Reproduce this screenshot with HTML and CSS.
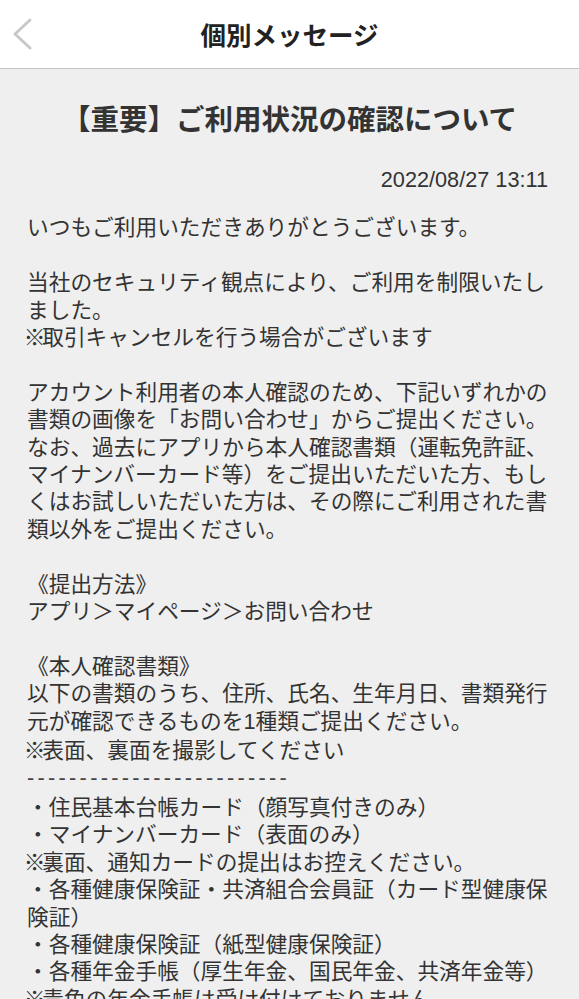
FILE: index.html
```html
<!DOCTYPE html>
<html lang="ja">
<head>
<meta charset="utf-8">
<title>個別メッセージ</title>
<link rel="stylesheet" href="styles.css">
</head>
<body>
<header class="nav">
  <div class="nav-side">
    <svg class="back" width="22" height="34" viewBox="0 0 22 34" aria-hidden="true">
      <polyline points="18,3 3,17 18,31" fill="none" stroke="#c8c8c8" stroke-width="3" stroke-linecap="round" stroke-linejoin="round"/>
    </svg>
  </div>
  <h1 class="nav-title">個別メッセージ</h1>
  <div class="nav-side"></div>
</header>
<main class="message">
  <h2 class="msg-title">【重要】ご利用状況の確認について</h2>
  <div class="msg-date">2022/08/27 13:11</div>
  <div class="msg-body">
    <p>いつもご利用いただきありがとうございます。</p>
    <p>当社のセキュリティ観点により、ご利用を制限いたし<br>ました。<br><span class="kome">※</span>取引キャンセルを行う場合がございます</p>
    <p>アカウント利用者の本人確認のため、下記いずれかの<br>書類の画像を「お問い合わせ」からご提出ください。<br>なお、過去にアプリから本人確認書類（運転免許証、<br>マイナンバーカード等）をご提出いただいた方、もし<br>くはお試しいただいた方は、その際にご利用された書<br>類以外をご提出ください。</p>
    <p>《提出方法》<br>アプリ＞マイページ＞お問い合わせ</p>
    <p>《本人確認書類》<br>以下の書類のうち、住所、氏名、生年月日、書類発行<br>元が確認できるものを<span class="num">1</span>種類ご提出ください。<br><span class="kome">※</span>表面、裏面を撮影してください<br><span class="dashes">-------------------------</span><br>・住民基本台帳カード（顔写真付きのみ）<br>・マイナンバーカード（表面のみ）<br><span class="kome">※</span>裏面、通知カードの提出はお控えください。<br>・各種健康保険証・共済組合会員証（カード型健康保<br>険証）<br>・各種健康保険証（紙型健康保険証）<br>・各種年金手帳（厚生年金、国民年金、共済年金等）<br><span class="kome">※</span>青色の年金手帳は受け付けておりません</p>
  </div>
</main>
</body>
</html>
```
FILE: styles.css
```css
html, body {
  margin: 0;
  padding: 0;
}
body {
  background: #efefef;
  font-family: "Noto Sans CJK JP", "Noto Sans", sans-serif;
  color: #333333;
  width: 579px;
  height: 999px;
  overflow: hidden;
}
.nav {
  display: grid;
  grid-template-columns: 1fr auto 1fr;
  align-items: center;
  height: 68px;
  background: #ffffff;
  border-bottom: 1px solid #c4c4c4;
  box-sizing: content-box;
}
.nav-side {
  display: flex;
  align-items: center;
}
.back {
  display: block;
  margin-left: 12px;
  margin-top: 0px;
}
.nav-title {
  margin: 0;
  font-size: 25.5px;
  font-weight: 700;
  color: #222222;
  line-height: 36px;
  white-space: nowrap;
}
.message {
  padding: 29px 27px 0 27px;
}
.msg-title {
  margin: 0;
  text-align: center;
  font-size: 28.5px;
  font-weight: 700;
  line-height: 40px;
  color: #333333;
  white-space: nowrap;
}
.msg-date {
  margin-top: 28px;
  text-align: right;
  font-family: "Liberation Sans", Arial, sans-serif;
  font-size: 21.7px;
  line-height: 27.4px;
  color: #333333;
  padding-right: 4px;
}
.msg-body {
  margin-top: 19px;
  font-size: 21.7px;
  line-height: 27.4px;
  color: #333333;
  white-space: nowrap;
}
.msg-body p {
  margin: 0 0 27.4px 0;
}
.kome {
  display: inline-block;
  margin-left: -0.15em;
  margin-right: -0.15em;
}
.num {
  font-family: "Liberation Sans", Arial, sans-serif;
}
.dashes {
  font-family: "Liberation Sans", Arial, sans-serif;
  letter-spacing: 3.3px;
  color: #444444;
}
```
